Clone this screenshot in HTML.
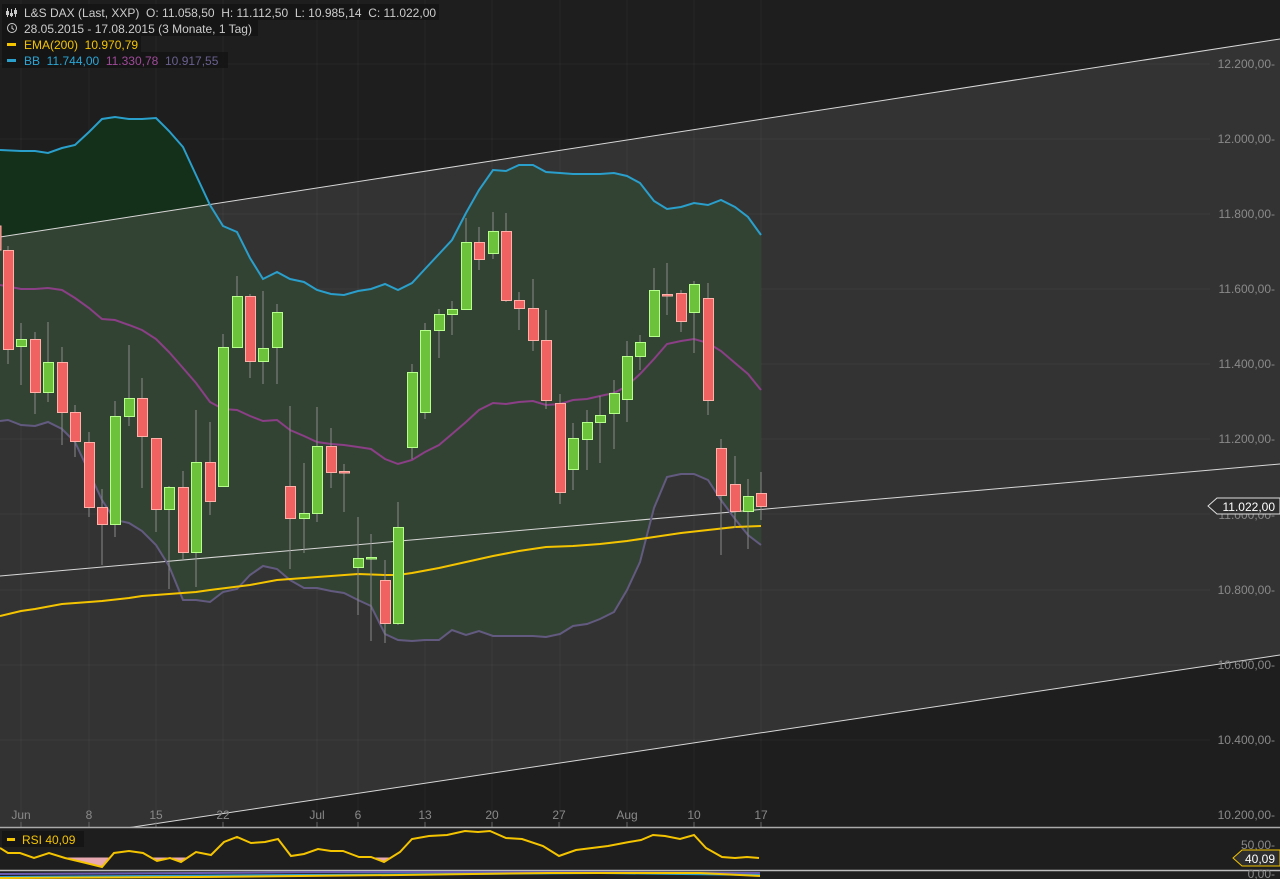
<!DOCTYPE html>
<html><head><meta charset="utf-8">
<style>
html,body{margin:0;padding:0;background:#1e1e1e;}
svg{display:block;font-family:"Liberation Sans",sans-serif;}
</style></head><body>
<svg width="1280" height="879" viewBox="0 0 1280 879" xmlns="http://www.w3.org/2000/svg">
<defs>
<clipPath id="plot"><rect x="0" y="0" width="1280" height="827"/></clipPath>
<clipPath id="above"><polygon points="0,0 1280,0 1280,39 0,237"/></clipPath>
<clipPath id="below"><polygon points="0,237 1280,39 1280,900 0,900"/></clipPath>
<clipPath id="rsilow"><rect x="0" y="857.5" width="1280" height="14"/></clipPath>
</defs>
<rect width="1280" height="879" fill="#1e1e1e"/>
<g clip-path="url(#plot)">
<polygon points="0,237 1280,39 1280,655 0,847" fill="#333333"/>
<g stroke="#ffffff" stroke-opacity="0.045" stroke-width="1">
<line x1="0" y1="64" x2="1210" y2="64"/><line x1="0" y1="139" x2="1210" y2="139"/><line x1="0" y1="214" x2="1210" y2="214"/><line x1="0" y1="289" x2="1210" y2="289"/><line x1="0" y1="364" x2="1210" y2="364"/><line x1="0" y1="439" x2="1210" y2="439"/><line x1="0" y1="514" x2="1210" y2="514"/><line x1="0" y1="590" x2="1210" y2="590"/><line x1="0" y1="665" x2="1210" y2="665"/><line x1="0" y1="740" x2="1210" y2="740"/>
<line x1="21" y1="0" x2="21" y2="827"/><line x1="89" y1="0" x2="89" y2="827"/><line x1="156" y1="0" x2="156" y2="827"/><line x1="223" y1="0" x2="223" y2="827"/><line x1="317" y1="0" x2="317" y2="827"/><line x1="358" y1="0" x2="358" y2="827"/><line x1="425" y1="0" x2="425" y2="827"/><line x1="492" y1="0" x2="492" y2="827"/><line x1="560" y1="0" x2="560" y2="827"/><line x1="627" y1="0" x2="627" y2="827"/><line x1="694" y1="0" x2="694" y2="827"/><line x1="761" y1="0" x2="761" y2="827"/>
</g>
<polygon clip-path="url(#below)" fill="#334333" points="0,150 21,151 35,151 48,153 62,148 75,145 89,132 102,119 115,117 129,119 142,119 156,118 169,131 183,147 196,175 210,205 223,226 237,232 250,258 263,279 277,272 290,279 304,282 317,290 331,294 344,295 358,291 371,289 385,284 398,290 412,283 425,269 439,254 452,240 466,213 479,190 493,170 506,171 519,165 533,165 546,172 560,173 573,174 587,174 600,174 614,173 627,176 640,183 654,201 667,209 681,207 694,203 708,205 721,200 735,207 748,217 761,235 761,545 748,535 735,519 721,500 708,480 694,474 681,474 667,477 654,508 640,562 627,590 614,612 600,619 587,624 573,626 560,634 546,637 533,636 519,636 506,636 493,636 479,631 466,635 452,630 439,640 425,640 412,641 398,640 385,634 371,606 358,600 344,593 331,591 317,588 304,588 290,580 277,569 263,566 250,575 237,589 223,592 210,602 196,600 183,600 169,566 156,545 142,531 129,523 115,520 102,500 89,472 75,442 62,429 48,422 35,426 21,425 8,420 0,421"/>
<polygon clip-path="url(#above)" fill="#15301a" points="0,150 21,151 35,151 48,153 62,148 75,145 89,132 102,119 115,117 129,119 142,119 156,118 169,131 183,147 196,175 210,205 223,226 237,232 250,258 263,279 761,279 761,545 0,545"/>
<g stroke="#d8d8d8" stroke-width="1" fill="none">
<line x1="0" y1="237" x2="1280" y2="39"/>
<line x1="0" y1="576" x2="1280" y2="464"/>
<line x1="0" y1="847" x2="1280" y2="655"/>
</g>
<polyline fill="none" stroke="#2a9fcc" stroke-width="2" points="0,150 21,151 35,151 48,153 62,148 75,145 89,132 102,119 115,117 129,119 142,119 156,118 169,131 183,147 196,175 210,205 223,226 237,232 250,258 263,279 277,272 290,279 304,282 317,290 331,294 344,295 358,291 371,289 385,284 398,290 412,283 425,269 439,254 452,240 466,213 479,190 493,170 506,171 519,165 533,165 546,172 560,173 573,174 587,174 600,174 614,173 627,176 640,183 654,201 667,209 681,207 694,203 708,205 721,200 735,207 748,217 761,235"/>
<polyline fill="none" stroke="#8a3f86" stroke-width="2" points="0,285 21,289 35,289 48,288 62,290 75,298 89,308 102,319 115,320 129,325 142,330 156,339 169,352 183,368 196,383 210,402 223,409 237,410 250,416 263,421 277,420 290,430 304,436 317,442 331,444 344,445 358,447 371,449 385,459 398,464 412,460 425,452 439,445 452,434 466,422 479,410 493,403 506,404 519,402 533,401 546,405 560,404 573,400 587,399 600,396 614,393 627,386 640,374 654,359 667,344 681,341 694,339 708,343 721,351 735,363 748,374 761,390"/>
<polyline fill="none" stroke="#635a80" stroke-width="2" points="0,421 8,420 21,425 35,426 48,422 62,429 75,442 89,472 102,500 115,520 129,523 142,531 156,545 169,566 183,600 196,600 210,602 223,592 237,589 250,575 263,566 277,569 290,580 304,588 317,588 331,591 344,593 358,600 371,606 385,634 398,640 412,641 425,640 439,640 452,630 466,635 479,631 493,636 506,636 519,636 533,636 546,637 560,634 573,626 587,624 600,619 614,612 627,590 640,562 654,508 667,477 681,474 694,474 708,480 721,500 735,519 748,535 761,545"/>
<polyline fill="none" stroke="#f5c400" stroke-width="2" points="0,616 21,611 35,609 62,604 89,602 102,601 129,598 142,596 169,594 196,592 210,590 250,585 277,580 304,578 331,576 358,574 385,575 398,575 412,573 439,568 466,562 493,556 519,551 546,547 573,546 600,544 627,541 654,537 681,533 708,530 735,527 761,526"/>
<g stroke="#8a8a8a" stroke-width="1">
<line x1="8" y1="246" x2="8" y2="364"/><line x1="21" y1="323" x2="21" y2="385"/><line x1="35" y1="332" x2="35" y2="414"/><line x1="48" y1="322" x2="48" y2="402"/><line x1="62" y1="347" x2="62" y2="445"/><line x1="75" y1="405" x2="75" y2="457"/><line x1="89" y1="432" x2="89" y2="517"/><line x1="102" y1="489" x2="102" y2="565"/><line x1="115" y1="401" x2="115" y2="537"/><line x1="129" y1="345" x2="129" y2="426"/><line x1="142" y1="378" x2="142" y2="488"/><line x1="156" y1="438" x2="156" y2="532"/><line x1="169" y1="486" x2="169" y2="589"/><line x1="183" y1="471" x2="183" y2="560"/><line x1="196" y1="410" x2="196" y2="587"/><line x1="210" y1="422" x2="210" y2="515"/><line x1="223" y1="334" x2="223" y2="487"/><line x1="237" y1="276" x2="237" y2="348"/><line x1="250" y1="294" x2="250" y2="378"/><line x1="263" y1="291" x2="263" y2="384"/><line x1="277" y1="304" x2="277" y2="384"/><line x1="290" y1="406" x2="290" y2="569"/><line x1="304" y1="463" x2="304" y2="553"/><line x1="317" y1="407" x2="317" y2="522"/><line x1="331" y1="428" x2="331" y2="488"/><line x1="344" y1="464" x2="344" y2="512"/><line x1="358" y1="517" x2="358" y2="615"/><line x1="371" y1="534" x2="371" y2="641"/><line x1="385" y1="560" x2="385" y2="643"/><line x1="398" y1="502" x2="398" y2="625"/><line x1="412" y1="364" x2="412" y2="459"/><line x1="425" y1="323" x2="425" y2="419"/><line x1="439" y1="309" x2="439" y2="358"/><line x1="452" y1="301" x2="452" y2="335"/><line x1="466" y1="218" x2="466" y2="309"/><line x1="479" y1="227" x2="479" y2="270"/><line x1="493" y1="212" x2="493" y2="259"/><line x1="506" y1="213" x2="506" y2="302"/><line x1="519" y1="292" x2="519" y2="330"/><line x1="533" y1="279" x2="533" y2="351"/><line x1="546" y1="310" x2="546" y2="409"/><line x1="560" y1="394" x2="560" y2="504"/><line x1="573" y1="423" x2="573" y2="490"/><line x1="587" y1="410" x2="587" y2="470"/><line x1="600" y1="396" x2="600" y2="463"/><line x1="614" y1="380" x2="614" y2="449"/><line x1="627" y1="341" x2="627" y2="422"/><line x1="640" y1="335" x2="640" y2="370"/><line x1="654" y1="268" x2="654" y2="336"/><line x1="667" y1="263" x2="667" y2="315"/><line x1="681" y1="290" x2="681" y2="332"/><line x1="694" y1="281" x2="694" y2="353"/><line x1="708" y1="283" x2="708" y2="415"/><line x1="721" y1="439" x2="721" y2="555"/><line x1="735" y1="456" x2="735" y2="528"/><line x1="748" y1="479" x2="748" y2="549"/><line x1="761" y1="472" x2="761" y2="520"/>
</g>
<g fill="#f06262" stroke="#ffb0a8" stroke-width="1">
<rect x="-6" y="226" width="7" height="24"/>
<rect x="3.5" y="250.5" width="10" height="99"/><rect x="30.5" y="339.5" width="10" height="53"/><rect x="57.5" y="362.5" width="10" height="50"/><rect x="70.5" y="412.5" width="10" height="29"/><rect x="84.5" y="442.5" width="10" height="65"/><rect x="97.5" y="507.5" width="10" height="17"/><rect x="137.5" y="398.5" width="10" height="38"/><rect x="151.5" y="438.5" width="10" height="71"/><rect x="178.5" y="487.5" width="10" height="65"/><rect x="205.5" y="462.5" width="10" height="39"/><rect x="245.5" y="296.5" width="10" height="65"/><rect x="285.5" y="486.5" width="10" height="32"/><rect x="326.5" y="446.5" width="10" height="26"/><rect x="339.5" y="471.5" width="10" height="1.5"/><rect x="380.5" y="580.5" width="10" height="43"/><rect x="474.5" y="242.5" width="10" height="17"/><rect x="501.5" y="231.5" width="10" height="69"/><rect x="514.5" y="300.5" width="10" height="8"/><rect x="528.5" y="308.5" width="10" height="32"/><rect x="541.5" y="340.5" width="10" height="60"/><rect x="555.5" y="403.5" width="10" height="89"/><rect x="662.5" y="294.5" width="10" height="1.5"/><rect x="676.5" y="293.5" width="10" height="28"/><rect x="703.5" y="298.5" width="10" height="102"/><rect x="716.5" y="448.5" width="10" height="47"/><rect x="730.5" y="484.5" width="10" height="27"/><rect x="756.5" y="493.5" width="10" height="13"/>
</g>
<g fill="#6cc23a" stroke="#b6ff8c" stroke-width="1">
<rect x="16.5" y="339.5" width="10" height="7"/><rect x="43.5" y="362.5" width="10" height="30"/><rect x="110.5" y="416.5" width="10" height="108"/><rect x="124.5" y="398.5" width="10" height="18"/><rect x="164.5" y="487.5" width="10" height="22"/><rect x="191.5" y="462.5" width="10" height="90"/><rect x="218.5" y="347.5" width="10" height="139"/><rect x="232.5" y="296.5" width="10" height="51"/><rect x="258.5" y="348.5" width="10" height="13"/><rect x="272.5" y="312.5" width="10" height="35"/><rect x="299.5" y="513.5" width="10" height="5"/><rect x="312.5" y="446.5" width="10" height="67"/><rect x="353.5" y="558.5" width="10" height="9"/><rect x="366.5" y="557.5" width="10" height="1.5"/><rect x="393.5" y="527.5" width="10" height="96"/><rect x="407.5" y="372.5" width="10" height="75"/><rect x="420.5" y="330.5" width="10" height="82"/><rect x="434.5" y="314.5" width="10" height="16"/><rect x="447.5" y="309.5" width="10" height="5"/><rect x="461.5" y="242.5" width="10" height="67"/><rect x="488.5" y="231.5" width="10" height="22"/><rect x="568.5" y="438.5" width="10" height="31"/><rect x="582.5" y="422.5" width="10" height="17"/><rect x="595.5" y="415.5" width="10" height="7"/><rect x="609.5" y="393.5" width="10" height="20"/><rect x="622.5" y="356.5" width="10" height="43"/><rect x="635.5" y="342.5" width="10" height="14"/><rect x="649.5" y="290.5" width="10" height="46"/><rect x="689.5" y="284.5" width="10" height="28"/><rect x="743.5" y="496.5" width="10" height="15"/>
</g>
</g>
<g fill="#8a8a8a" font-size="12" text-anchor="end">
<text x="1275" y="68">12.200,00-</text><text x="1275" y="143">12.000,00-</text><text x="1275" y="218">11.800,00-</text><text x="1275" y="293">11.600,00-</text><text x="1275" y="368">11.400,00-</text><text x="1275" y="443">11.200,00-</text><text x="1275" y="519">11.000,00-</text><text x="1275" y="594">10.800,00-</text><text x="1275" y="669">10.600,00-</text><text x="1275" y="744">10.400,00-</text><text x="1275" y="819">10.200,00-</text>
</g>
<polygon points="1208,506 1217,498 1280,498 1280,514 1217,514" fill="#2e2e2e" stroke="#dddddd" stroke-width="1"/>
<text x="1275" y="511" fill="#ffffff" font-size="12" text-anchor="end">11.022,00</text>
<g fill="#8a8a8a" font-size="12" text-anchor="middle">
<text x="21" y="819">Jun</text><text x="89" y="819">8</text><text x="156" y="819">15</text><text x="223" y="819">22</text><text x="317" y="819">Jul</text><text x="358" y="819">6</text><text x="425" y="819">13</text><text x="492" y="819">20</text><text x="559" y="819">27</text><text x="627" y="819">Aug</text><text x="694" y="819">10</text><text x="761" y="819">17</text>
</g>
<g stroke="#666" stroke-width="1">
<line x1="21" y1="822" x2="21" y2="827"/><line x1="89" y1="822" x2="89" y2="827"/><line x1="156" y1="822" x2="156" y2="827"/><line x1="223" y1="822" x2="223" y2="827"/><line x1="317" y1="822" x2="317" y2="827"/><line x1="358" y1="822" x2="358" y2="827"/><line x1="425" y1="822" x2="425" y2="827"/><line x1="492" y1="822" x2="492" y2="827"/><line x1="559" y1="822" x2="559" y2="827"/><line x1="627" y1="822" x2="627" y2="827"/><line x1="694" y1="822" x2="694" y2="827"/><line x1="761" y1="822" x2="761" y2="827"/>
</g>
<rect x="0" y="828" width="1280" height="42" fill="#1e1e1e"/>
<line x1="0" y1="827.5" x2="1280" y2="827.5" stroke="#aaaaaa" stroke-width="1.5"/>
<polygon clip-path="url(#rsilow)" fill="#e8a8b0" points="0,848 8,853 20,853 34,858 49,853 65,858 86,863 102,867 114,853 129,851 143,853 157,861 170,858 181,862 196,852 211,855 224,842 237,837 251,843 265,842 278,839 291,856 304,854 318,849 331,851 343,851 359,857 371,857 384,862 400,852 412,839 429,836 447,835 465,831 478,832 490,831 506,838 522,839 543,846 559,856 576,850 592,848 608,846 629,842 641,840 653,835 665,836 680,839 694,835 706,848 722,857 735,858 747,857 759,858 759,857.5 0,857.5"/>
<polyline fill="none" stroke="#f5c400" stroke-width="2" points="0,848 8,853 20,853 34,858 49,853 65,858 86,863 102,867 114,853 129,851 143,853 157,861 170,858 181,862 196,852 211,855 224,842 237,837 251,843 265,842 278,839 291,856 304,854 318,849 331,851 343,851 359,857 371,857 384,862 400,852 412,839 429,836 447,835 465,831 478,832 490,831 506,838 522,839 543,846 559,856 576,850 592,848 608,846 629,842 641,840 653,835 665,836 680,839 694,835 706,848 722,857 735,858 747,857 759,858"/>
<line x1="0" y1="870.5" x2="1280" y2="870.5" stroke="#bbbbbb" stroke-width="1.5"/>
<g stroke-width="2" fill="none">
<polyline stroke="#6a5ab0" points="0,874 200,873 330,872 500,872 760,873"/>
<polyline stroke="#2a9fcc" points="0,877 150,876 300,875 450,874 600,873 760,875"/>
<polyline stroke="#f5c400" points="0,878 200,877 400,875 550,873 700,873 760,876"/>
</g>
<g fill="#8a8a8a" font-size="12" text-anchor="end">
<text x="1275" y="849">50,00-</text><text x="1275" y="878">0,00-</text>
</g>
<polygon points="1233,858 1242,850 1280,850 1280,866 1242,866" fill="#2e2e2e" stroke="#f5c400" stroke-width="1"/>
<text x="1275" y="863" fill="#ffffff" font-size="12" text-anchor="end">40,09</text>
<rect x="2" y="831" width="82" height="16" fill="#141414" fill-opacity="0.85"/>
<rect x="7" y="838" width="8" height="3" fill="#f5c400"/>
<text x="22" y="844" fill="#f5c400" font-size="12">RSI  40,09</text>
<g font-size="12">
<rect x="2" y="4" width="437" height="16" fill="#141414" fill-opacity="0.85"/>
<rect x="2" y="20" width="256" height="16" fill="#141414" fill-opacity="0.85"/>
<rect x="2" y="36" width="139" height="16" fill="#141414" fill-opacity="0.85"/>
<rect x="2" y="52" width="226" height="16" fill="#141414" fill-opacity="0.85"/>
<g stroke="#cccccc" stroke-width="1" fill="none">
<line x1="7.5" y1="8" x2="7.5" y2="17"/><line x1="11.5" y1="9" x2="11.5" y2="17"/><line x1="15.5" y1="8" x2="15.5" y2="17"/>
<rect x="6.5" y="11.5" width="2" height="3"/><rect x="10.5" y="13.5" width="2" height="2"/><rect x="14.5" y="10.5" width="2" height="3"/>
<circle cx="12" cy="28" r="4.5"/><polyline points="12,25.5 12,28.5 14,29.5"/>
</g>
<text x="24" y="17" fill="#cccccc" xml:space="preserve">L&amp;S DAX (Last, XXP)  O: 11.058,50  H: 11.112,50  L: 10.985,14  C: 11.022,00</text>
<text x="24" y="33" fill="#cccccc">28.05.2015 - 17.08.2015 (3 Monate, 1 Tag)</text>
<rect x="7" y="43" width="9" height="3" fill="#f5c400"/>
<text x="24" y="49" fill="#f5c400" xml:space="preserve">EMA(200)  10.970,79</text>
<rect x="7" y="59" width="9" height="3" fill="#2a9fcc"/>
<text x="24" y="65" xml:space="preserve"><tspan fill="#2aa6d6">BB  11.744,00</tspan><tspan fill="#a04a9a">  11.330,78</tspan><tspan fill="#6a6090">  10.917,55</tspan></text>
</g>
</svg>
</body></html>
